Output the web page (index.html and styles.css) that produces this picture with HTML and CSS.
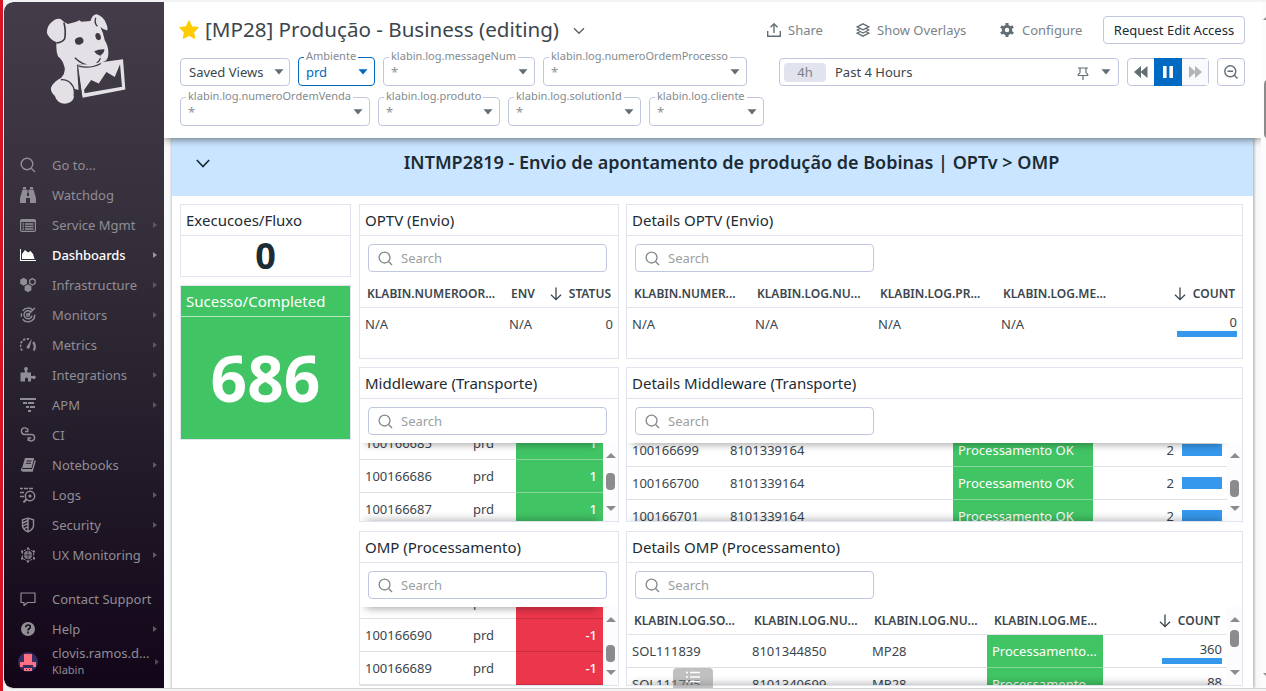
FILE: index.html
```html
<!DOCTYPE html>
<html lang="pt-BR">
<head>
<meta charset="utf-8">
<title>[MP28] Produção - Business</title>
<link rel="stylesheet" href="styles.css">
</head>
<body>
<svg class="defs" aria-hidden="true">
  <symbol id="i-search" viewBox="0 0 16 16"><g fill="none" stroke="currentColor" stroke-width="1.4"><circle cx="7" cy="7" r="5.8"/><path d="M11.2 11.2l3.8 3.8"/></g></symbol>
  <symbol id="i-sort" viewBox="0 0 12 14"><path d="M6 .5v12M1 7.8l5 4.9 5-4.9" fill="none" stroke="currentColor" stroke-width="1.3"/></symbol>
  <symbol id="i-down" viewBox="0 0 10 6"><path d="M.5 .3h9L5 5.5z" fill="currentColor"/></symbol>
</svg>
<div class="app">
  <nav class="sidebar">
    <div class="brand">
      <svg class="dog" viewBox="135 35 250 280">
        <path fill="#e3e1e5" d="M152 68Q168 52 182 56Q193 67 204 71L229 64L238 60L245 64L272 62Q277 43 291 42Q309 47 318 67Q326 82 322 91Q309 86 302 80Q311 98 315 120Q329 143 325 168Q323 180 313 184L302 188Q281 196 260 194L231 194L236 270L222 266Q228 294 212 306Q193 316 177 306Q166 298 165 288Q151 276 153 263Q159 246 184 233Q199 216 193 198Q188 179 174 168Q167 150 170 126Q149 118 141 99Q140 80 152 68Z"/>
        <g fill="#3f3944"><ellipse cx="238" cy="122" rx="13" ry="11" transform="rotate(-18 238 122)"/><ellipse cx="295" cy="109" rx="8" ry="11" transform="rotate(-15 295 109)"/><path d="M283 153Q298 146 314 147Q314 158 301 167Q290 164 283 153Z"/><path d="M301 166l3 9-2-9z"/></g>
        <path d="M192 67Q199 94 194 116Q187 127 170 128" fill="none" stroke="#3f3944" stroke-width="5"/>
        <path d="M288 52Q282 67 293 78M225 173Q247 195 271 195Q294 194 302 174M183 239Q205 236 219 258Q225 270 223 290" fill="none" stroke="#3f3944" stroke-width="4"/>
        <path d="M232 196L370 177L377 268L248 293Z" fill="#e3e1e5"/>
        <path d="M233 194L246 293" fill="none" stroke="#3f3944" stroke-width="3"/>
        <path d="M254 280L253 269L274 240L297 250L320 216L345 231L361 192L367 260Z" fill="#3f3944"/>
        <path d="M236 198Q273 207 303 190" fill="none" stroke="#3f3944" stroke-width="4"/>
      </svg>
    </div>
    <ul class="menu">
      <li><svg class="ic"><use href="#i-search"/></svg><span>Go to...</span></li>
      <li><svg class="ic" viewBox="0 0 16 16"><path fill="currentColor" d="M3 0h3v2H3zM10 0h3v2h-3zM2.5 2.6H7V9h2V2.6h4.5L16 11v5h-6v-5H6v5H0v-5zM7.4 3h1.2v3H7.4z"/></svg><span>Watchdog</span></li>
      <li class="more"><svg class="ic" viewBox="0 0 16 16"><rect x=".6" y="2.6" width="14.8" height="11.8" rx="1.2" fill="none" stroke="currentColor" stroke-width="1.2"/><path d="M1 4h14" stroke="currentColor" stroke-width="2"/><path d="M2.5 7h1.6M5 7h8.5M2.5 9.5h1.6M5 9.5h8.5M2.5 12h1.6M5 12h8.5" stroke="currentColor" stroke-width="1.4"/></svg><span>Service Mgmt</span></li>
      <li class="more active"><svg class="ic" viewBox="0 0 16 16"><path fill="currentColor" d="M0 2h1v11h15v1H0zM2 12V7l3-4 3 2.5L10.5 4 13 7l1.6 5z"/></svg><span>Dashboards</span></li>
      <li class="more"><svg class="ic" viewBox="0 0 16 16"><path fill="currentColor" d="M3.6 .8l3.4 2v4L3.6 8.8.2 6.8v-4zM8 7.2l3.4 2v4L8 15.2l-3.4-2v-4z"/><path d="M12.4 1.6l2.7 1.6v3.2L12.4 8 9.7 6.4V3.2z" fill="none" stroke="currentColor" stroke-width="1.3"/></svg><span>Infrastructure</span></li>
      <li class="more"><svg class="ic" viewBox="0 0 16 16"><g fill="none" stroke="currentColor" stroke-width="1.4"><path d="M13 3.2A6.8 6.8 0 0 0 2.6 3.8M1.4 6.2v3.6M2.6 12.2A6.8 6.8 0 0 0 14.7 7.6M11 5A4 4 0 1 0 12 8.6M15 .8L8 8"/><circle cx="8" cy="8" r="1.4"/></g></svg><span>Monitors</span></li>
      <li class="more"><svg class="ic" viewBox="0 0 16 16"><path d="M2.2 13.5A7 7 0 0 1 9 2" fill="none" stroke="currentColor" stroke-width="1.8" stroke-dasharray="2.4 1.4"/><path d="M13.2 5Q16 9 13.8 13.5" fill="none" stroke="currentColor" stroke-width="2.2"/><path fill="currentColor" d="M12 1.5L9.5 11a1.7 1.7 0 0 1-3-1z"/></svg><span>Metrics</span></li>
      <li class="more"><svg class="ic" viewBox="0 0 16 16"><path fill="currentColor" d="M.5 5.500h4.300V3.200a1.800 1.800 0 1 1 2.400 0v2.300H11V9h1.800a1.700 1.700 0 1 1 0 2.400H11v3.100H8V12a1.500 1.500 0 0 0-3 0v2.500H.5z"/></svg><span>Integrations</span></li>
      <li class="more"><svg class="ic" viewBox="0 0 16 16"><path d="M0 2h16M3 6h4M8 6h6M6 10h3M10 10h5M8 14h3" stroke="currentColor" stroke-width="2"/></svg><span>APM</span></li>
      <li><svg class="ic" viewBox="0 0 16 16"><path d="M8 3.800A3.300 3.300 0 1 0 4.500 7.500h7A3.200 3.200 0 1 1 8.300 11.500M7.800 1.500v3H5M8.200 14v-3h3" fill="none" stroke="currentColor" stroke-width="1.400"/></svg><span>CI</span></li>
      <li class="more"><svg class="ic" viewBox="0 0 16 16"><path fill="currentColor" d="M5 1h9.200L11.500 11H2z"/><path d="M2 11.200Q.8 14 3 14h9.200l3-10.500M2.500 12.600h9.300" fill="none" stroke="currentColor" stroke-width="1.400"/><path d="M6.500 4h5M6 6.300h5" stroke="#241e2c" stroke-width="1"/></svg><span>Notebooks</span></li>
      <li class="more"><svg class="ic" viewBox="0 0 16 16"><path d="M0 1.500h3M4 1.500h4M9 1.500h4M0 5.500h4M0 9.500h4" stroke="currentColor" stroke-width="1.700"/><circle cx="10" cy="9" r="4.700" fill="none" stroke="currentColor" stroke-width="1.500"/><circle cx="10" cy="9" r="1.600" fill="currentColor"/><path d="M6.500 12.200L3.400 15.400" stroke="currentColor" stroke-width="2"/></svg><span>Logs</span></li>
      <li class="more"><svg class="ic" viewBox="0 0 16 16"><path d="M8 1.200l5.500 1.600v6Q13 12.500 8 14.900 3 12.500 2.500 8.800v-6zM8 1v14M2.800 6L8 3.500M3 9l5-2.600M4.400 11.500L8 9.600" fill="none" stroke="currentColor" stroke-width="1.400"/></svg><span>Security</span></li>
      <li class="more"><svg class="ic" viewBox="0 0 16 16"><circle cx="8" cy="8" r="4.200" fill="currentColor" opacity=".85"/><path d="M8 1.500l5.700 3.300v6.400L8 14.500l-5.700-3.300V4.800z" fill="none" stroke="currentColor" stroke-width="1" stroke-dasharray="2.500 1.300"/><path fill="currentColor" d="M7 .5h2v2H7zM7 13.500h2v2H7zM1 3.500h2v2H1zM13 3.500h2v2h-2zM1 10.500h2v2H1zM13 10.500h2v2h-2z"/><path d="M4 8h8M8 4v8" stroke="#1b1424" stroke-width=".7"/></svg><span>UX Monitoring</span></li>
    </ul>
    <ul class="menu menu-end">
      <li><svg class="ic" viewBox="0 0 16 16"><path d="M1 2h14v9.500H7.500L4 14.500v-3H1z" fill="none" stroke="currentColor" stroke-width="1.200" stroke-linejoin="round"/></svg><span>Contact Support</span></li>
      <li class="more"><svg class="ic" viewBox="0 0 16 16"><circle cx="8" cy="8" r="7" fill="currentColor"/><path d="M5.700 6.200Q5.900 4 8.100 4t2.200 1.900Q10.300 7 9 7.700 8 8.300 8 9.400M8 10.600v1.800" fill="none" stroke="#150b1c" stroke-width="1.600"/></svg><span>Help</span></li>
    </ul>
    <div class="user">
      <svg class="avatar" viewBox="0 0 20 20"><circle cx="10" cy="10" r="10" fill="#352d60"/><path fill="#ff7182" d="M6 2h8v8h4v5h-3v-2H5v2H2v-5h4zM6 16h8v3H6z"/><path d="M8 17.500h1M11 17.500h1" stroke="#352d60"/></svg>
      <div class="user-text"><span>clovis.ramos.d...</span><small>Klabin</small></div>
    </div>
  </nav>

  <main class="main">
    <header class="head">
      <div class="title-row">
        <svg class="star" viewBox="0 0 18 17"><path fill="#fc0" stroke="#fc0" stroke-linejoin="round" d="M9 .8l2.500 5.200 5.700.8-4.100 4 1 5.600L9 13.700l-5.100 2.700 1-5.600-4.100-4 5.700-.8z"/></svg>
        <h1>[MP28] Produção - Business (editing)</h1>
        <svg class="chev" viewBox="0 0 12 8"><path d="M1 1.200l5 5 5-5" fill="none" stroke="currentColor" stroke-width="1.400"/></svg>
        <div class="actions">
          <span class="act share"><svg class="i14" viewBox="0 0 14 14"><path d="M7 10V1M3.500 4.200L7 .8l3.500 3.400M.7 8v5.300h12.600V8" fill="none" stroke="currentColor" stroke-width="1.400"/></svg>Share</span>
          <span class="act overlays"><svg class="i14" viewBox="0 0 14 14"><path d="M7 .8l5.800 3L7 6.800l-5.800-3zM3.800 5.500L1.200 7 7 10l5.800-3-2.600-1.500M3.800 8.800l-2.600 1.400 5.800 3 5.800-3-2.600-1.400" fill="none" stroke="currentColor" stroke-width="1.300"/></svg>Show Overlays</span>
          <span class="act configure"><svg class="i14" viewBox="0 0 14 14"><circle cx="7" cy="7" r="3.700" fill="none" stroke="currentColor" stroke-width="3"/><path d="M7 0v3M7 11v3M.9 3.500l2.600 1.500M10.500 9l2.600 1.500M.9 10.500L3.500 9M10.500 5l2.600-1.500" stroke="currentColor" stroke-width="3"/></svg>Configure</span>
          <button class="btn">Request Edit Access</button>
        </div>
      </div>
      <div class="controls">
        <div class="filters">
          <div class="filter-row">
            <div class="field saved"><span class="val">Saved Views</span><svg class="caret"><use href="#i-down"/></svg></div>
            <div class="field tall on w77"><label>Ambiente</label><span class="val">prd</span><svg class="caret"><use href="#i-down"/></svg></div>
            <div class="field tall w152"><label>klabin.log.messageNum</label><span class="val">*</span><svg class="caret"><use href="#i-down"/></svg></div>
            <div class="field tall w204"><label>klabin.log.numeroOrdemProcesso</label><span class="val">*</span><svg class="caret"><use href="#i-down"/></svg></div>
          </div>
          <div class="filter-row">
            <div class="field tall w190"><label>klabin.log.numeroOrdemVenda</label><span class="val">*</span><svg class="caret"><use href="#i-down"/></svg></div>
            <div class="field tall w122"><label>klabin.log.produto</label><span class="val">*</span><svg class="caret"><use href="#i-down"/></svg></div>
            <div class="field tall w133"><label>klabin.log.solutionId</label><span class="val">*</span><svg class="caret"><use href="#i-down"/></svg></div>
            <div class="field tall w115"><label>klabin.log.cliente</label><span class="val">*</span><svg class="caret"><use href="#i-down"/></svg></div>
          </div>
        </div>
        <div class="time">
          <div class="range"><span class="pill">4h</span><span class="range-text">Past 4 Hours</span>
            <svg class="pin" viewBox="0 0 12 13"><path d="M1 1h10M3 1v5M9 1v5M.8 8.500h10.400M3 6Q1.200 6.500 1 8.500M9 6q1.800.5 2 2.500M6 8.500V13" fill="none" stroke="currentColor" stroke-width="1.200"/></svg>
            <svg class="caret"><use href="#i-down"/></svg></div>
          <div class="play">
            <span><svg viewBox="0 0 14 12"><path fill="currentColor" d="M7 0v12L0 6zM13.500 0v12L6.500 6z"/></svg></span>
            <span class="pause"><svg viewBox="0 0 14 12"><path fill="#fff" d="M2 0h3.600v12H2zM8.400 0H12v12H8.400z"/></svg></span>
            <span class="fwd"><svg viewBox="0 0 14 12"><path fill="currentColor" d="M1 0l7 6-7 6zM7 0l7 6-7 6z"/></svg></span>
          </div>
          <div class="zoomout"><svg viewBox="0 0 14 14"><g fill="none" stroke="currentColor" stroke-width="1.400"><circle cx="6.300" cy="6.300" r="5.500"/><path d="M10.300 10.300l3.200 3.200M3.500 6.300h5.600"/></g></svg></div>
        </div>
      </div>
    </header>

    <section class="board">
      <div class="banner"><svg viewBox="0 0 14 9"><path d="M.8 1l6.200 6.500L13.200 1" fill="none" stroke="currentColor" stroke-width="1.700"/></svg><h2>INTMP2819 - Envio de apontamento de produção de Bobinas | OPTv &gt; OMP</h2></div>
      <div class="grid">
        <div class="col">
          <article class="widget exec"><h3>Execucoes/Fluxo</h3><div class="num">0</div></article>
          <article class="widget done"><h3>Sucesso/Completed</h3><div class="num big">686</div></article>
        </div>
        <div class="col">
          <article class="widget"><h3>OPTV (Envio)</h3>
            <div class="find"><div class="search"><svg><use href="#i-search"/></svg>Search</div></div>
            <div class="table t-optv">
              <div class="row th"><span>KLABIN.NUMEROOR...</span><span>ENV</span><span class="sort"><svg><use href="#i-sort"/></svg>STATUS</span></div>
              <div class="row last"><span>N/A</span><span>N/A</span><span class="r">0</span></div>
            </div>
          </article>
          <article class="widget"><h3>Middleware (Transporte)</h3>
            <div class="find"><div class="search"><svg><use href="#i-search"/></svg>Search</div></div>
            <div class="scroll top-shade bottom-shade">
              <div class="table t-status off16">
                <div class="row"><span>100166685</span><span>prd</span><span class="r ok">1</span></div>
                <div class="row"><span>100166686</span><span>prd</span><span class="r ok">1</span></div>
                <div class="row"><span>100166687</span><span>prd</span><span class="r ok">1</span></div>
              </div>
              <div class="bar"><i class="up"></i><b class="m10"></b><i class="dn"></i></div>
            </div>
          </article>
          <article class="widget third"><h3>OMP (Processamento)</h3>
            <div class="find"><div class="search"><svg><use href="#i-search"/></svg>Search</div></div>
            <div class="scroll top-shade">
              <div class="table t-status off21">
                <div class="row"><span>100166691</span><span>prd</span><span class="r bad">-1</span></div>
                <div class="row"><span>100166690</span><span>prd</span><span class="r bad">-1</span></div>
                <div class="row"><span>100166689</span><span>prd</span><span class="r bad">-1</span></div>
              </div>
              <div class="bar"><i class="up"></i><b class="m18"></b><i class="dn"></i></div>
            </div>
          </article>
        </div>
        <div class="col details">
          <article class="widget"><h3>Details OPTV (Envio)</h3>
            <div class="find"><div class="search"><svg><use href="#i-search"/></svg>Search</div></div>
            <div class="table t-det1">
              <div class="row th"><span>KLABIN.NUMER...</span><span>KLABIN.LOG.NU...</span><span>KLABIN.LOG.PR...</span><span>KLABIN.LOG.ME...</span><span class="sort"><svg><use href="#i-sort"/></svg>COUNT</span></div>
              <div class="row last"><span>N/A</span><span>N/A</span><span>N/A</span><span>N/A</span><span class="count">0</span></div>
            </div>
          </article>
          <article class="widget"><h3>Details Middleware (Transporte)</h3>
            <div class="find"><div class="search"><svg><use href="#i-search"/></svg>Search</div></div>
            <div class="scroll top-shade bottom-shade">
              <div class="table t-det2 off9">
                <div class="row"><span>100166699</span><span>8101339164</span><span class="ok">Processamento OK</span><span class="meter">2</span></div>
                <div class="row"><span>100166700</span><span>8101339164</span><span class="ok">Processamento OK</span><span class="meter">2</span></div>
                <div class="row"><span>100166701</span><span>8101339164</span><span class="ok">Processamento OK</span><span class="meter">2</span></div>
              </div>
              <div class="bar"><i class="up"></i><b class="m17"></b><i class="dn"></i></div>
            </div>
          </article>
          <article class="widget third"><h3>Details OMP (Processamento)</h3>
            <div class="find"><div class="search"><svg><use href="#i-search"/></svg>Search</div></div>
            <div class="scroll bottom-shade">
              <div class="table t-det3">
                <div class="row th"><span>KLABIN.LOG.SO...</span><span>KLABIN.LOG.NU...</span><span>KLABIN.LOG.NU...</span><span>KLABIN.LOG.ME...</span><span class="sort"><svg><use href="#i-sort"/></svg>COUNT</span></div>
                <div class="row"><span>SOL111839</span><span>8101344850</span><span>MP28</span><span class="ok">Processamento...</span><span class="count">360</span></div>
                <div class="row"><span>SOL111795</span><span>8101340699</span><span>MP28</span><span class="ok">Processamento...</span><span class="count">88</span></div>
              </div>
              <div class="bar"><i class="up"></i><b class="m3"></b><i class="dn"></i></div>
            </div>
          </article>
        </div>
      </div>
      <div class="toc"><svg viewBox="0 0 14 12"><path d="M0 1.500h2M4 1.500h10M0 6h2M4 6h10M0 10.500h2M4 10.500h10" stroke="#fff" stroke-width="1.300"/></svg></div>
    </section>
  </main>
  <div class="page-bar"><i class="up"></i><b></b><i class="dn"></i></div>
</div>
</body>
</html>
```

FILE: styles.css
```css
* { box-sizing: border-box; }
body { margin: 0; width: 1266px; height: 691px; overflow: hidden; background: #f3f3f3; font: 13px/16px "Noto Sans", sans-serif; color: #3b464d; border-left: 3px solid #d91424; }
h1, h2, h3, ul { margin: 0; padding: 0; font-weight: 400; }
.defs { position: absolute; width: 0; height: 0; }
.app { display: flex; height: 687px; margin: 2px 0 0 1px; overflow: hidden; background: #f8f9fb; border-bottom: 1px solid #d4d4d4; border-radius: 9px 0 0 9px; }

.sidebar { width: 160px; flex: none; height: 686px; background: linear-gradient(#443d49, #342e3a 35%, #231c2a 65%, #120518); border-radius: 9px 0 0 9px; color: #918d95; overflow: hidden; }
.brand { height: 148px; padding: 10px 0 0 41px; }
.dog { width: 83px; height: 93px; display: block; }
.menu { list-style: none; }
.menu li { display: flex; align-items: center; height: 30px; padding-left: 16px; position: relative; white-space: nowrap; }
.menu-end { margin-top: 14px; }
.ic { width: 16px; height: 16px; margin-right: 16px; flex: none; }
.menu .active { color: #fff; font-weight: 500; letter-spacing: -.1px; }
.more::after { content: ""; position: absolute; right: 7px; top: 12px; border: 3px solid transparent; border-left: 4px solid #5d5863; border-right: 0; }
.active::after { border-left-color: #99959c; }
.user { display: flex; align-items: center; height: 34px; margin-top: 1px; padding-left: 14px; position: relative; }
.user::after { content: ""; position: absolute; right: 5px; top: 14px; border: 3px solid transparent; border-left: 4px solid #4f4656; border-right: 0; }
.avatar { width: 20px; height: 20px; margin-right: 14px; }
.user-text { display: flex; flex-direction: column; padding-bottom: 1px; }
.user-text span { line-height: 17px; }
.user-text small { font-size: 11px; line-height: 16px; }

.main { width: 1097px; flex: none; }
.head { height: 136px; background: #fff; position: relative; z-index: 2; box-shadow: 0 1px 8px rgba(0,0,0,.55); clip-path: inset(0 0 -12px 0); padding: 14px 16px 0 15px; }
.title-row { display: flex; height: 28px; align-items: center; }
.star { width: 20px; height: 19px; margin: -1px 6px 0 0; }
h1 { font-size: 20.6px; line-height: 28px; white-space: nowrap; width: 354px; padding-bottom: 3px; }
.chev { width: 12px; height: 8px; margin: 2px 0 0 14px; color: #5c666d; }
.actions { display: flex; align-items: center; margin-left: auto; color: #7b8388; }
.act { display: flex; align-items: center; white-space: nowrap; }
.i14 { width: 14px; height: 14px; margin-right: 7px; color: #626d74; }
.configure .i14 { margin-right: 8px; }
.share { width: 89px; }
.overlays { width: 144px; }
.configure { width: 103px; }
.btn { width: 142px; height: 28px; border: 1px solid #c0c6e0; border-radius: 4px; background: #fff; font: 13px "Noto Sans", sans-serif; color: #1c2b34; padding: 0; white-space: nowrap; }

.controls { display: flex; justify-content: space-between; padding: 13px 0 0 1px; }
.filter-row { display: flex; gap: 8px; align-items: flex-end; height: 29px; margin-bottom: 11px; }
.field { position: relative; display: flex; align-items: center; justify-content: space-between; height: 28px; border: 1px solid #c0c6e0; border-radius: 4px; padding: 0 6px 0 8px; color: #8a9196; }
.tall { height: 29px; padding-left: 7px; }
.field label { position: absolute; left: 5px; top: -10px; padding: 0 2px; background: #fff; font-size: 11px; line-height: 16px; color: #838b90; white-space: nowrap; }
.saved { width: 110px; color: #3b464d; padding-right: 5px; }
.caret { width: 10px; height: 6px; color: #626d74; flex: none; }
.on { border-color: #0069c2; color: #0069c2; }
.on .caret { color: #0069c2; }
.w77 { width: 77px; } .w152 { width: 152px; } .w204 { width: 204px; } .w190 { width: 190px; }
.w122 { width: 122px; } .w133 { width: 133px; } .w115 { width: 115px; }
.time { display: flex; gap: 8px; height: 28px; margin-top: 1px; }
.range { width: 340px; display: flex; align-items: center; border: 1px solid #c0c6e0; border-radius: 4px; padding: 0 7px 0 4px; }
.pill { width: 42px; height: 19px; line-height: 18px; text-align: center; background: #e1e3ee; border-radius: 4px; color: #7b8388; }
.range-text { margin-left: 9px; }
.pin { width: 12px; height: 13px; margin: 2px 12px 0 auto; color: #626d74; }
.play { display: flex; width: 82px; border: 1px solid #c0c6e0; border-radius: 4px; }
.play span { width: 26px; display: flex; align-items: center; justify-content: center; color: #626d74; }
.play svg { width: 14px; height: 12px; }
.play .pause { width: 28px; background: #0069c2; margin: -1px 0; }
.play .fwd { color: #b2b6bb; background: #f9fafc; }
.zoomout { width: 28px; border: 1px solid #c0c6e0; border-radius: 4px; padding: 6px; color: #626d74; }
.zoomout svg { width: 14px; height: 14px; display: block; }

.board { width: 1082px; height: 550px; margin-left: 7px; background: #fff; border-left: 1px solid #d6d6da; box-shadow: 1px 0 3px rgba(0,0,0,.35); position: relative; overflow: hidden; }
.banner { height: 58px; background: #cae5ff; display: flex; color: #1c2b34; padding: 0 0 8px 24px; align-items: center; }
.banner svg { width: 14px; height: 9px; flex: none; }
h2 { flex: 1; text-align: center; font-size: 18px; font-weight: 600; line-height: 24px; white-space: nowrap; padding-bottom: 2px; }
.grid { display: grid; grid-template-columns: 171px 260px 617px; column-gap: 8px; padding: 8px 0 0 8px; height: 492px; }
.col { display: flex; flex-direction: column; gap: 8px; }
.details { margin-left: -1px; width: 617px; }
.widget { border: 1px solid #e1e3ee; height: 155px; background: #fff; overflow: hidden; flex: none; }
.third { margin-top: 1px; }
h3 { font-size: 15px; line-height: 30px; height: 31px; border-bottom: 1px solid #e1e3ee; padding-left: 5px; color: #1c2b34; white-space: nowrap; }
.exec { height: 73px; }
.num { text-align: center; font-size: 36px; font-weight: 700; line-height: 39px; color: #1c2b34; }
.done { background: #41c464; }
.done h3 { color: #fff; border-color: #b5e8c2; }
.done .num { color: #fff; font-size: 64px; line-height: 122px; }
.find { padding: 8px; height: 44px; background: #fff; }
.search { width: 239px; height: 28px; border: 1px solid #c0c6e0; border-radius: 4px; display: flex; align-items: center; color: #9a9fa3; }
.search svg { width: 15px; height: 15px; margin: 0 8px 0 9px; color: #80888d; }

.scroll { position: relative; display: flex; height: 78px; overflow: hidden; }
.scroll .table { flex: 1; }
.top-shade::before, .bottom-shade::after { content: ""; position: absolute; z-index: 1; left: 6px; right: 21px; height: 10px; }
.top-shade::before { top: -10px; box-shadow: 0 1px 9px rgba(0,0,0,.4); }
.bottom-shade::after { bottom: -10px; box-shadow: 0 -1px 8px rgba(0,0,0,.3); }
.off16 { margin-top: -16px; } .off21 { margin-top: -21px; } .off9 { margin-top: -9px; }
.row { display: grid; height: 33px; border-bottom: 1px solid #dfe0e3; line-height: 32px; white-space: nowrap; }
.row > span { padding-left: 5px; }
.row.last { border: 0; }
.row.th { height: 28px; line-height: 27px; font-size: 12px; font-weight: 600; border-color: #e1e3ee; }
.row.th > span { padding-left: 7px; }
.row > .r { text-align: right; padding-right: 6px; }
.row > .sort { display: flex; justify-content: flex-end; align-items: center; padding-right: 7px; }
.details .row > .sort { padding-right: 7px; }
.sort svg { width: 12px; height: 14px; margin-right: 7px; }
.ok, .bad { background: #41c464; color: #fff; margin-bottom: -1px; border-bottom: 1px solid #8bd59e; }
.bad { background: #eb364b; border-color: #c92f42; }
.t-optv .row { grid-template-columns: 144px 1fr 80px; }
.t-optv .last .r { padding-right: 5px; }
.t-status .row { grid-template-columns: 108px 48px 1fr; }
.t-status .r { font-weight: 500; }
.t-det1 .row { grid-template-columns: repeat(4, 123px) 1fr; }
.t-det2 .row { grid-template-columns: 98px 228px 140px 1fr; }
.t-det3 .row { grid-template-columns: 120px 120px 120px 116px 1fr; }
.row > .count { position: relative; text-align: right; line-height: 29px; padding-right: 5px; }
.count::after { content: ""; position: absolute; right: 5px; bottom: 3px; width: 60px; height: 6px; background: #3598ec; }
.t-det1 .count::after { bottom: 4px; }
.row > .meter { display: flex; justify-content: flex-end; align-items: center; gap: 8px; padding-right: 5px; }
.meter::after { content: ""; width: 40px; height: 12px; background: #3598ec; }

.bar { width: 15px; flex: none; height: 78px; background: #fcfcfc; display: flex; flex-direction: column; align-items: center; padding: 10px 0; }
.up, .dn { border: 5px solid transparent; border-top: 0; border-bottom: 5px solid #8b8b8b; height: 0; flex: none; }
.dn { border-bottom: 0; border-top: 5px solid #8b8b8b; margin-top: auto; }
.bar b { width: 9px; height: 17px; border-radius: 4px; background: #8b8b8b; flex: none; }
.m10 { margin-top: 15px; } .m18 { margin-top: 23px; } .m17 { margin-top: 22px; } .m3 { margin-top: 8px; }

.toc { position: absolute; left: 501px; bottom: 0; width: 40px; height: 20px; border-radius: 4px 4px 0 0; background: rgba(130,130,130,.5); display: flex; justify-content: center; z-index: 3; }
.toc svg { width: 14px; height: 12px; margin-top: 3px; }
.page-bar { width: 5px; background: #fcfcfc; display: flex; flex-direction: column; padding: 13px 0 10px 2px; overflow: hidden; }
.page-bar b { width: 10px; height: 60px; margin: 59px 0 0 1px; border-radius: 5px; background: #8b8b8b; flex: none; }
```
